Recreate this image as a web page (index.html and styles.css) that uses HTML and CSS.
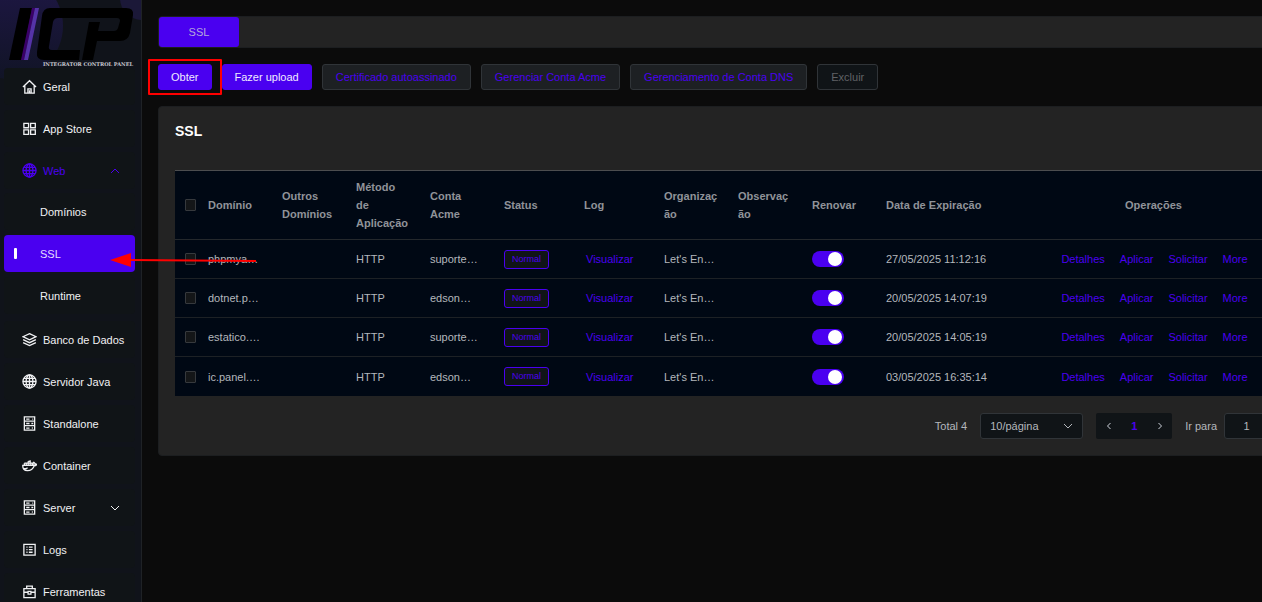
FILE: index.html
```html
<!DOCTYPE html>
<html lang="pt-BR">
<head>
  <meta charset="UTF-8" />
  <meta name="viewport" content="width=device-width, initial-scale=1.0"/>
  <title>SSL - Integrator Control Panel</title>
  <link rel="stylesheet" href="styles.css">
</head>
<body>

  <!-- shared icons -->
  <svg class="sprite" aria-hidden="true">
    <symbol id="i-home" viewBox="0 0 16 16"><path d="M1 8.5 8 1.8l7 6.7M3 7v8h10V7M6.3 15v-4.5h3.4V15M8 12v3"/></symbol>
    <symbol id="i-grid" viewBox="0 0 16 16"><path d="M2 2.5h5v4.7H2zM9.2 2.5h5v4.7h-5zM2 9.5h5v4.7H2zM9.2 9.5h5v4.7h-5z"/></symbol>
    <symbol id="i-globe" viewBox="0 0 16 16"><circle cx="8" cy="8" r="7"/><ellipse cx="8" cy="8" rx="3.6" ry="7"/><path d="M8 1v14M1 8h14M2 4.7h12M2 11.3h12"/></symbol>
    <symbol id="i-layers" viewBox="0 0 16 16"><path d="M8 1.8 15 5 8 8.3 1 5zM1.2 8.2 8 11.4l6.8-3.2M1.2 11.3 8 14.5l6.8-3.2"/></symbol>
    <symbol id="i-server" viewBox="0 0 16 16"><path d="M2.5 1h11v14h-11zM2.5 5.5h11M2.5 10.3h11M4.5 3.3H8M4.5 8H8M4.5 13H8M11 3.3h1M10 8h2M10.5 12.8h1"/></symbol>
    <symbol id="i-docker" viewBox="0 0 16 16"><path d="M.8 7.8h11.3c-.5-1.3-.3-2.5.5-3.3.8.5 1.200 1.200 1.200 2 .7-.2 1.400-.1 1.900.3-.5 1-1.500 1.400-2.600 1.400-1.400 3.600-3.800 5.300-7.300 5.300C2.300 13.500.7 11.500.8 7.800zM2.500 5.500h8.300v2.300M4.500 5.500v2.300M6.600 3.500v4.300M8.700 2.500v5.300M6.600 3.500h2.100M2.500 5.500v2.300M1.500 11.300c1.700.3 3.300-.1 4.500-1"/></symbol>
    <symbol id="i-logs" viewBox="0 0 16 16"><path d="M2 2.500h12v11.500H2zM4.700 5.500h1.200M7.300 5.500h4M4.700 8.200h1.200M7.300 8.200h4M4.700 10.900h1.200M7.300 10.900h4"/></symbol>
    <symbol id="i-tools" viewBox="0 0 16 16"><path d="M2 5h12v9.500H2zM5 5V2.200h6V5M2 8.800h4.500M9.500 8.800H14M6.500 7.800h3v3h-3z"/></symbol>
    <symbol id="i-down" viewBox="0 0 10 10"><path d="M1 3l4 4 4-4"/></symbol>
    <symbol id="i-up" viewBox="0 0 10 10"><path d="M1 7l4-4 4 4"/></symbol>
    <symbol id="i-prev" viewBox="0 0 10 10"><path d="M6.500 2 3.500 5l3 3"/></symbol>
    <symbol id="i-next" viewBox="0 0 10 10"><path d="M3.500 2l3 3-3 3"/></symbol>
  </svg>

  <aside class="sidebar">
    <a class="logo" href="#">
      <svg viewBox="0 0 141 68" role="img" aria-label="ICP Integrator Control Panel">
        <defs>
          <linearGradient id="glow" x1="0" y1="0" x2="0" y2="1">
            <stop offset="0" stop-color="#1f1747"/>
            <stop offset="1" stop-color="#111426"/>
          </linearGradient>
        </defs>
        <circle cx="10" cy="26" r="53" fill="url(#glow)"/>
        <circle cx="142" cy="-2" r="22" fill="#1b1838"/>
        <path fill="#000" d="M20 8h12L22 60H9z"/>
        <path fill="#3a0068" d="M32 8h3L24 60h-3z"/>
        <path fill="#5533a8" d="M35 8h4L28 60h-4z"/>
        <path fill="#000" d="M50 8h76q8 0 7 7l-3 18q-2 8-10 8H97l-4 19H82l7-38h11l-2 9h16q3 0 4-3l2-7q0-3-3-3H58q-4 0-5 4l-4 24q-1 4 3 4h28l-1 10H44q-8 0-7-8l5-36q1-8 8-8z"/>
        <text class="logo-caption" x="133" y="66" text-anchor="end">INTEGRATOR CONTROL PANEL</text>
      </svg>
    </a>
    <ul class="menu">
      <li><a class="item" href="#"><svg class="icon"><use href="#i-home"/></svg>Geral</a></li>
      <li><a class="item" href="#"><svg class="icon"><use href="#i-grid"/></svg>App Store</a></li>
      <li>
        <a class="item open" href="#"><svg class="icon"><use href="#i-globe"/></svg>Web<svg class="arrow"><use href="#i-up"/></svg></a>
        <ul class="submenu">
          <li><a class="item" href="#">Domínios</a></li>
          <li><a class="item active" href="#">SSL</a></li>
          <li><a class="item" href="#">Runtime</a></li>
        </ul>
      </li>
      <li><a class="item" href="#"><svg class="icon"><use href="#i-layers"/></svg>Banco de Dados</a></li>
      <li><a class="item" href="#"><svg class="icon"><use href="#i-globe"/></svg>Servidor Java</a></li>
      <li><a class="item" href="#"><svg class="icon"><use href="#i-server"/></svg>Standalone</a></li>
      <li><a class="item" href="#"><svg class="icon"><use href="#i-docker"/></svg>Container</a></li>
      <li><a class="item" href="#"><svg class="icon"><use href="#i-server"/></svg>Server<svg class="arrow"><use href="#i-down"/></svg></a></li>
      <li><a class="item" href="#"><svg class="icon"><use href="#i-logs"/></svg>Logs</a></li>
      <li><a class="item" href="#"><svg class="icon"><use href="#i-tools"/></svg>Ferramentas</a></li>
    </ul>
  </aside>

  <main class="main">
    <div class="content">
      <nav class="tabs"><a class="tab" href="#">SSL</a></nav>

      <div class="toolbar">
        <span class="marked"><button class="btn primary">Obter</button></span>
        <button class="btn primary">Fazer upload</button>
        <button class="btn">Certificado autoassinado</button>
        <button class="btn">Gerenciar Conta Acme</button>
        <button class="btn">Gerenciamento de Conta DNS</button>
        <button class="btn" disabled>Excluir</button>
      </div>

      <section class="card">
        <h2>SSL</h2>
        <table class="certs">
          <colgroup>
            <col class="c-check"><col class="c-text"><col class="c-text"><col class="c-text"><col class="c-text">
            <col class="c-wide"><col class="c-wide"><col class="c-text"><col class="c-text"><col class="c-text">
            <col class="c-date"><col>
          </colgroup>
          <thead>
            <tr>
              <th class="check"><input type="checkbox" class="box" aria-label="Selecionar todos"></th>
              <th>Domínio</th>
              <th>Outros Domínios</th>
              <th>Método de Aplicação</th>
              <th>Conta Acme</th>
              <th>Status</th>
              <th>Log</th>
              <th>Organização</th>
              <th>Observação</th>
              <th>Renovar</th>
              <th>Data de Expiração</th>
              <th class="ops">Operações</th>
            </tr>
          </thead>
          <tbody>
            <tr>
              <td class="check"><input type="checkbox" class="box" aria-label="Selecionar phpmya"></td>
              <td>phpmya…</td><td></td><td>HTTP</td><td>suporte…</td>
              <td><span class="tag">Normal</span></td>
              <td><a class="link log" href="#">Visualizar</a></td>
              <td>Let's En…</td><td></td>
              <td><input type="checkbox" role="switch" class="switch" aria-label="Renovar phpmya" checked></td>
              <td>27/05/2025 11:12:16</td>
              <td><div class="actions"><a class="link" href="#">Detalhes</a><a class="link" href="#">Aplicar</a><a class="link" href="#">Solicitar</a><a class="link" href="#">More</a></div></td>
            </tr>
            <tr>
              <td class="check"><input type="checkbox" class="box" aria-label="Selecionar dotnet.p"></td>
              <td>dotnet.p…</td><td></td><td>HTTP</td><td>edson…</td>
              <td><span class="tag">Normal</span></td>
              <td><a class="link log" href="#">Visualizar</a></td>
              <td>Let's En…</td><td></td>
              <td><input type="checkbox" role="switch" class="switch" aria-label="Renovar dotnet.p" checked></td>
              <td>20/05/2025 14:07:19</td>
              <td><div class="actions"><a class="link" href="#">Detalhes</a><a class="link" href="#">Aplicar</a><a class="link" href="#">Solicitar</a><a class="link" href="#">More</a></div></td>
            </tr>
            <tr>
              <td class="check"><input type="checkbox" class="box" aria-label="Selecionar estatico"></td>
              <td>estatico.…</td><td></td><td>HTTP</td><td>suporte…</td>
              <td><span class="tag">Normal</span></td>
              <td><a class="link log" href="#">Visualizar</a></td>
              <td>Let's En…</td><td></td>
              <td><input type="checkbox" role="switch" class="switch" aria-label="Renovar estatico" checked></td>
              <td>20/05/2025 14:05:19</td>
              <td><div class="actions"><a class="link" href="#">Detalhes</a><a class="link" href="#">Aplicar</a><a class="link" href="#">Solicitar</a><a class="link" href="#">More</a></div></td>
            </tr>
            <tr>
              <td class="check"><input type="checkbox" class="box" aria-label="Selecionar ic.panel"></td>
              <td>ic.panel.…</td><td></td><td>HTTP</td><td>edson…</td>
              <td><span class="tag">Normal</span></td>
              <td><a class="link log" href="#">Visualizar</a></td>
              <td>Let's En…</td><td></td>
              <td><input type="checkbox" role="switch" class="switch" aria-label="Renovar ic.panel" checked></td>
              <td>03/05/2025 16:35:14</td>
              <td><div class="actions"><a class="link" href="#">Detalhes</a><a class="link" href="#">Aplicar</a><a class="link" href="#">Solicitar</a><a class="link" href="#">More</a></div></td>
            </tr>
          </tbody>
        </table>

        <div class="pagination">
          <span>Total 4</span>
          <div class="size">
            <select aria-label="Itens por página"><option>10/página</option></select>
            <svg class="arrow"><use href="#i-down"/></svg>
          </div>
          <div class="pager">
            <button aria-label="Anterior"><svg class="arrow"><use href="#i-prev"/></svg></button>
            <button class="current">1</button>
            <button aria-label="Próxima"><svg class="arrow"><use href="#i-next"/></svg></button>
          </div>
          <label class="jump">Ir para <input type="text" value="1"></label>
        </div>
      </section>
    </div>
  </main>

  <svg class="pointer" viewBox="0 0 147 16" aria-hidden="true">
    <path d="M0 8 21 1v14z" fill="#f00" stroke="none"/>
    <path d="M20 8 146 9" stroke="#f00" stroke-width="2"/>
  </svg>

</body>
</html>
```

FILE: styles.css
```css
* {
  box-sizing: border-box;
}

body {
  display: flex;
  position: relative;
  margin: 0;
  height: 100vh;
  overflow: hidden;
  background: #0b0b0b;
  color: #b4b7bc;
  font-family: "Liberation Sans", Arial, sans-serif;
  font-size: 11px;
}

a {
  text-decoration: none;
}

button, input, select {
  margin: 0;
  font: inherit;
}

svg {
  fill: none;
  stroke: currentColor;
}

.sprite {
  display: none;
}

/* Sidebar */
.sidebar {
  flex: none;
  width: 142px;
  overflow: hidden;
  background: #10131a;
  border-right: 1px solid #1f2226;
}

.logo svg {
  display: block;
  width: 100%;
  height: 68px;
  overflow: visible;
  stroke: none;
}

.logo-caption {
  fill: #c8c8d0;
  font-family: "DejaVu Serif", serif;
  font-size: 5px;
  font-weight: bold;
}

.menu, .submenu {
  display: flex;
  flex-direction: column;
  gap: 5px;
  margin: 0;
  padding: 0;
  list-style: none;
}

.menu {
  position: relative;
  padding: 0 6px 0 4px;
}

.submenu {
  padding: 4px 0 2px;
}

.item {
  display: flex;
  align-items: center;
  gap: 6px;
  height: 37px;
  padding: 0 15px 0 18px;
  border-radius: 4px;
  background: #101417;
  color: #f0f1f3;
  white-space: nowrap;
}

.item.open {
  color: #4a00f0;
}

.submenu .item {
  padding-left: 36px;
}

.submenu .item.active {
  position: relative;
  background: #4a00f0;
  color: #e4dcff;
}

.item.active::before {
  content: "";
  position: absolute;
  left: 10px;
  width: 3px;
  height: 11px;
  border-radius: 1px;
  background: #fff;
}

.icon {
  flex: none;
  width: 15px;
  height: 15px;
  stroke-width: 1.4;
}

.arrow {
  flex: none;
  width: 10px;
  height: 10px;
}

.item .arrow {
  margin-left: auto;
}

/* Main area */
.main {
  flex: 1;
  min-width: 0;
  overflow: hidden;
  padding: 16px;
}

.content {
  margin-right: -40px;
}

.tabs {
  display: flex;
  height: 32px;
  background: #232323;
  border: 1px solid #1c1e20;
  border-radius: 4px;
}

.tab {
  width: 80px;
  border-radius: 3px;
  background: #4a00f0;
  color: #b3a6dc;
  line-height: 30px;
  text-align: center;
}

.toolbar {
  display: flex;
  gap: 10px;
  margin: 16px 0;
}

.btn {
  height: 26px;
  padding: 0 13px;
  border: 1px solid #303438;
  border-radius: 3px;
  background: #1d2023;
  color: #4a00f0;
  white-space: nowrap;
  cursor: pointer;
}

.btn.primary {
  padding: 0 12px;
  border-color: #4a00f0;
  background: #4a00f0;
  color: #efeaff;
}

.btn:disabled {
  background: #101417;
  color: #606266;
  cursor: not-allowed;
}

.marked {
  position: relative;
}

.marked::after {
  content: "";
  position: absolute;
  inset: -5px -10px;
  border: 2px solid #f00;
  border-radius: 1px;
  pointer-events: none;
}

.card {
  padding: 16px;
  border: 1px solid #1c1e20;
  border-radius: 4px;
  background: #232323;
}

.card h2 {
  margin: 0 0 31px;
  color: #fff;
  font-size: 14px;
  line-height: 16px;
}

/* Certificates */
.certs {
  width: 100%;
  table-layout: fixed;
  border-spacing: 0;
  border-top: 1px solid #4c4d4f;
  background: #000814;
}

.c-check {
  width: 24px;
}

.c-text {
  width: 74px;
}

.c-wide {
  width: 80px;
}

.c-date {
  width: 163px;
}

.certs th {
  height: 69px;
  padding: 0 11px 0 9px;
  border-bottom: 1px solid #24282c;
  color: #909399;
  line-height: 18px;
  text-align: left;
  word-break: break-word;
}

.certs td {
  height: 39px;
  padding: 0 9px;
  border-bottom: 1px solid #1d2125;
  white-space: nowrap;
}

.certs tr:last-child td {
  border-bottom: 0;
}

.certs .check {
  padding: 0 0 0 10px;
}

.certs .ops {
  text-align: center;
}

.box, .switch {
  display: block;
  appearance: none;
}

.box {
  width: 11px;
  height: 12px;
  border: 1px solid #36393d;
  border-radius: 1px;
  background: #141618;
}

.tag {
  display: inline-block;
  padding: 0 7px;
  border: 1px solid #4a00f0;
  border-radius: 3px;
  background: #101417;
  color: #4a00f0;
  font-size: 9px;
  line-height: 17px;
}

.link {
  color: #4a00f0;
}

.log {
  padding-left: 2px;
}

.switch {
  width: 32px;
  height: 16px;
  padding: 1px 2px;
  border-radius: 8px;
  background: #4a00f0;
}

.switch::before {
  content: "";
  display: block;
  width: 14px;
  height: 14px;
  border-radius: 50%;
  background: #fff;
}

.switch:checked::before {
  margin-left: auto;
}

.actions {
  display: flex;
  justify-content: center;
  gap: 15px;
}

/* Pagination */
.pagination {
  display: flex;
  justify-content: flex-end;
  align-items: center;
  gap: 13px;
  margin-top: 17px;
}

.size {
  display: flex;
  position: relative;
  align-items: center;
}

.size select {
  appearance: none;
  width: 103px;
  height: 26px;
  padding: 0 9px;
  border: 1px solid #303438;
  border-radius: 3px;
  background: #101417;
  color: inherit;
}

.size .arrow {
  position: absolute;
  right: 10px;
}

.pager {
  display: flex;
  border-radius: 2px;
  background: #101417;
}

.pager button {
  display: flex;
  align-items: center;
  justify-content: center;
  width: 25px;
  height: 26px;
  padding: 0;
  border: 0;
  background: none;
  color: #cfd3dc;
}

.pager .current {
  width: 26px;
  color: #4a00f0;
  font-weight: bold;
}

.jump {
  display: flex;
  align-items: center;
  gap: 7px;
}

.jump input {
  width: 45px;
  height: 26px;
  border: 1px solid #303438;
  border-radius: 3px;
  background: #101417;
  color: inherit;
  text-align: center;
}

/* Red arrow pointing at the active menu entry */
.pointer {
  position: absolute;
  top: 252px;
  left: 110px;
  width: 147px;
  height: 16px;
  pointer-events: none;
}
```
